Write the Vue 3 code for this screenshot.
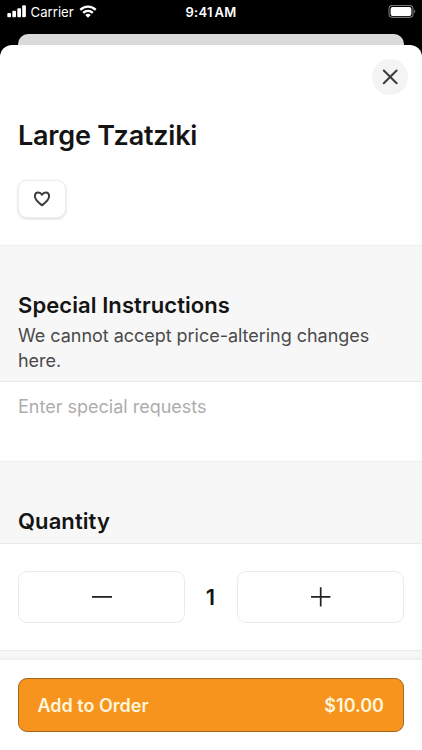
<script setup>
import { ref } from 'vue'

const quantity = ref(1)
const favorite = ref(false)
const requests = ref('')
</script>

<template>
  <main class="phone">
    <header class="status">
      <div class="carrier">
        <svg class="signal" width="20" height="13" viewBox="0 0 20 13" fill="#fff">
          <rect x="0.3" y="8" width="3.7" height="4.2" rx="1" />
          <rect x="5.3" y="5.8" width="3.7" height="6.4" rx="1" />
          <rect x="10.3" y="3.2" width="3.7" height="9" rx="1" />
          <rect x="15.2" y="0.2" width="3.7" height="12" rx="1" />
        </svg>
        <span class="carrier-name">Carrier</span>
        <svg class="wifi" width="18" height="13" viewBox="0 0 18 13" fill="none" stroke="#fff" stroke-width="2.3">
          <path d="M1.3 4.9C5.5.4 12.5.4 16.7 4.9" />
          <path d="M4.2 7.9C6.9 5.1 11.1 5.1 13.8 7.9" />
          <path d="M6.2 9.9Q9 7.7 11.8 9.9L9 12.7Z" fill="#fff" stroke="none" />
        </svg>
      </div>
      <span class="time">9:41 AM</span>
      <svg class="battery" width="28" height="14" viewBox="0 0 28 14">
        <rect x="1" y="0.4" width="24" height="12" rx="3.3" fill="none" stroke="#777" stroke-width="1.1" />
        <rect x="2.6" y="1.9" width="20.8" height="9" rx="2" fill="#fff" />
        <path d="M26.2 4.2Q28.4 6.4 26.2 8.6Z" fill="#777" />
      </svg>
    </header>
    <div class="sheet-behind"></div>
    <section class="sheet">
      <div class="intro">
        <button class="close" aria-label="Close">
          <svg width="16" height="16" viewBox="0 0 16 16" fill="none" stroke="#3c3c3c" stroke-width="2" stroke-linecap="round">
            <path d="M1.8 1.5 14.6 14.3M14.6 1.5 1.8 14.3" />
          </svg>
        </button>
        <h1>Large Tzatziki</h1>
        <button class="favorite" aria-label="Favorite" @click="favorite = !favorite">
          <svg width="18" height="16" viewBox="0 0 18 16" :fill="favorite ? '#3c3c3c' : 'none'" stroke="#3c3c3c" stroke-width="2" stroke-linejoin="round">
            <path d="M9 14.3C6.8 12.6 1.9 9.2 1.9 5.3C1.9 3.1 3.3 1.6 5.2 1.6C6.9 1.6 8.2 2.4 9 3.7C9.8 2.4 11.1 1.6 12.8 1.6C14.7 1.6 16.1 3.1 16.1 5.3C16.1 9.2 11.2 12.6 9 14.3Z" />
          </svg>
        </button>
      </div>
      <div class="band instructions">
        <h2>Special Instructions</h2>
        <p>We cannot accept price-altering changes here.</p>
      </div>
      <textarea v-model="requests" placeholder="Enter special requests"></textarea>
      <div class="band quantity-head">
        <h2 class="quantity-title">Quantity</h2>
      </div>
      <div class="stepper">
        <button aria-label="Decrease" @click="quantity = Math.max(1, quantity - 1)">
          <svg width="20" height="20" viewBox="0 0 20 20" stroke="#222" stroke-width="1.8"><path d="M0 9.9H20" /></svg>
        </button>
        <span class="count">{{ quantity }}</span>
        <button aria-label="Increase" @click="quantity++">
          <svg width="20" height="20" viewBox="0 0 20 20" stroke="#222" stroke-width="1.7"><path d="M0 9.9H19.4M9.7 0.2V19.6" /></svg>
        </button>
      </div>
      <div class="spacer"></div>
      <footer>
        <button class="add">
          <span class="add-label">Add to Order</span>
          <span class="price">${{ (quantity * 10).toFixed(2) }}</span>
        </button>
      </footer>
    </section>
  </main>
</template>

<style>
body { margin: 0; background: #000; }
</style>

<style scoped>
* { box-sizing: border-box; }
.phone {
  width: 422px;
  height: 750px;
  overflow: hidden;
  display: flex;
  flex-direction: column;
  background: #000;
  color: #141414;
  font-family: Inter, "Liberation Sans", sans-serif;
}
button { font: inherit; color: inherit; padding: 0; margin: 0; display: flex; align-items: center; justify-content: center; }
svg { display: block; flex: none; }
h1, h2, p { margin: 0; }
.status {
  height: 34px;
  flex: none;
  display: grid;
  grid-template-columns: 1fr auto 1fr;
  align-items: start;
  padding: 5px 6px 0 7px;
  color: #fff;
}
.carrier { display: flex; align-items: flex-start; }
.carrier-name { font-size: 13.2px; line-height: 14px; margin-left: 3.5px; width: 44px; white-space: nowrap; }
.wifi { margin-left: 4.5px; }
.time { font-size: 13px; font-weight: 600; line-height: 14px; letter-spacing: 0.3px; word-spacing: -2px; margin-left: -1px; }
.battery { justify-self: end; }
.sheet-behind { height: 11px; flex: none; margin: 0 18px; border-radius: 10px 10px 0 0; background: #dadada; }
.sheet { flex: 1; display: flex; flex-direction: column; background: #fff; border-radius: 12px 12px 0 0; overflow: hidden; }
.intro { height: 200px; flex: none; padding: 14px 14px 0 18px; }
.close { width: 36px; height: 36px; margin-left: auto; border: 0; border-radius: 50%; background: #f4f4f4; }
h1 { font-size: 27px; line-height: 34px; font-weight: 600; margin-top: 24px; letter-spacing: -0.22px; white-space: nowrap; }
.favorite { width: 48px; height: 38px; margin-top: 27px; border: 1px solid #eee; border-radius: 9px; background: #fff; box-shadow: 0 1px 3px rgba(0, 0, 0, 0.16); }
.band { flex: none; background: #f7f7f7; border-top: 1px solid #eee; border-bottom: 1px solid #eaeaea; padding: 0 18px; }
.instructions { height: 137px; padding-top: 45px; }
h2 { font-size: 22px; line-height: 28px; font-weight: 600; letter-spacing: 0.08px; }
p { font-size: 18px; line-height: 25px; color: #4a4a4a; margin-top: 4px; letter-spacing: -0.03px; }
textarea { display: block; flex: none; height: 79px; padding: 13px 18px; border: 0; outline: 0; resize: none; background: #fff; font: 18px/24px Inter, "Liberation Sans", sans-serif; color: #141414; }
textarea::placeholder { color: #adadad; opacity: 1; }
.quantity-head { height: 83px; padding-top: 45px; }
.stepper { height: 106px; flex: none; display: grid; grid-template-columns: 167px 1fr 167px; align-items: start; padding: 27px 18px 0; }
.stepper button { height: 52px; border: 1px solid #ebebeb; border-radius: 9px; background: #fff; }
.count { text-align: center; font-size: 22px; font-weight: 600; line-height: 52px; padding-right: 1px; }
.spacer { height: 10px; flex: none; background: linear-gradient(#f7f7f7 50%, #efefef); border-top: 1px solid #ebebeb; }
footer { flex: 1; padding: 18px 18px 0; background: #fff; }
.add { width: 100%; height: 54px; justify-content: space-between; padding: 0 19px 0 18.5px; border: 1px solid #a5681c; border-radius: 9px; background: #f6941e; color: #fff6dc; font-size: 18px; font-weight: 600; }
</style>
